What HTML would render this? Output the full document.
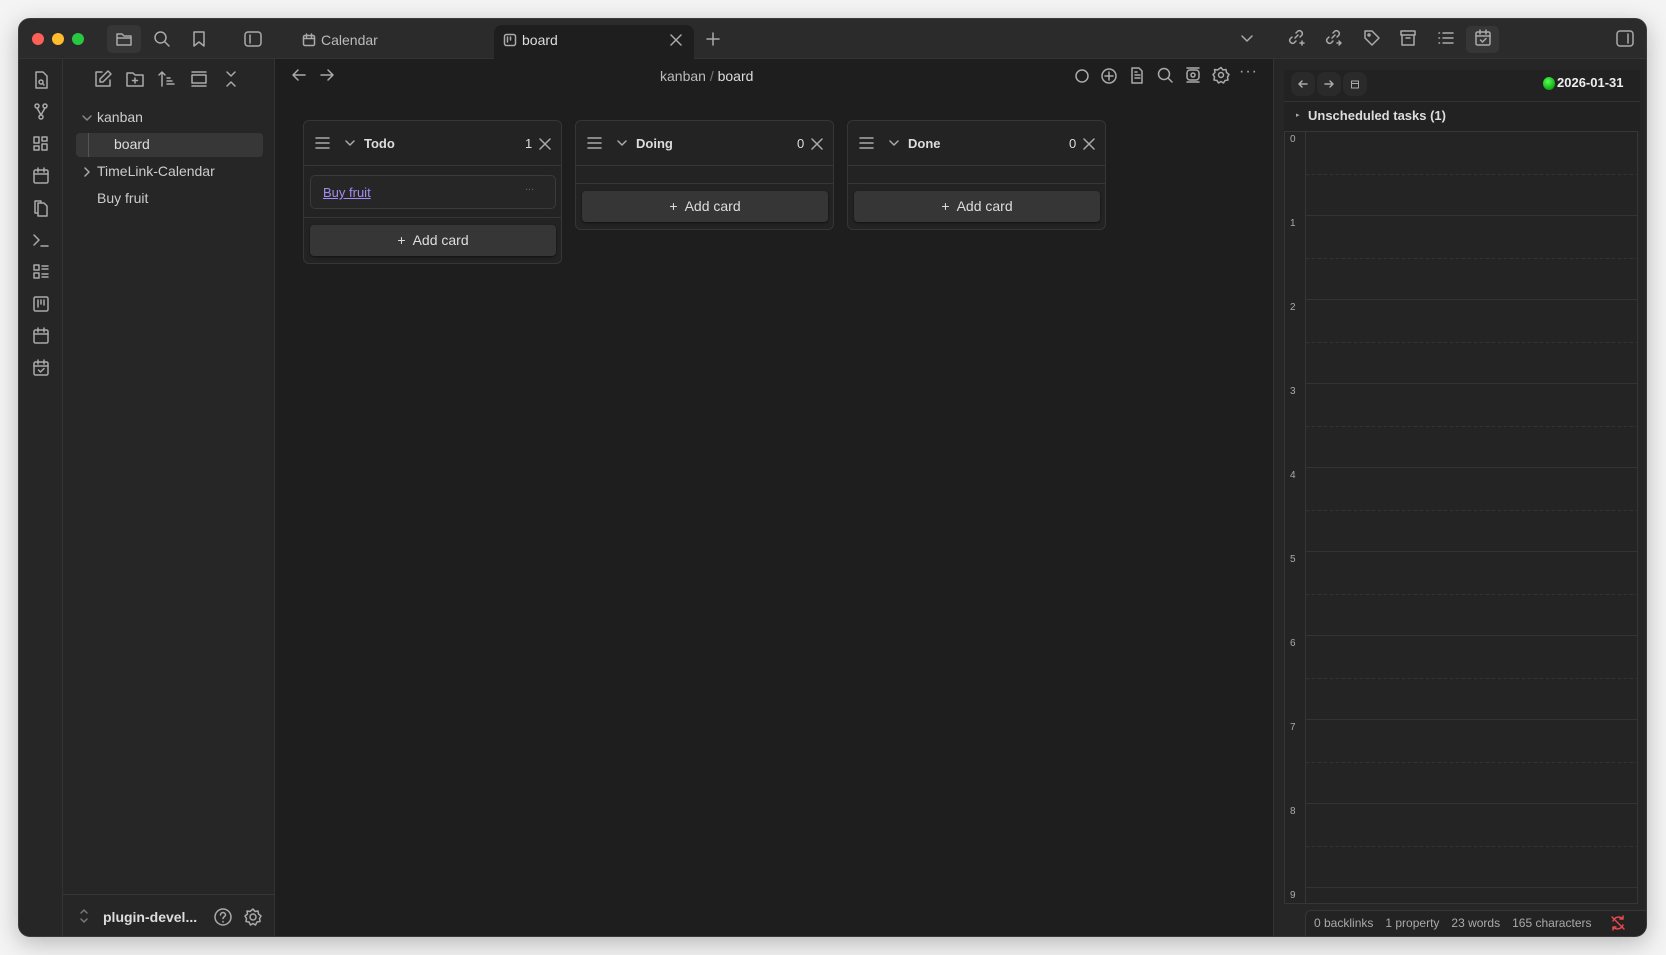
<!DOCTYPE html>
<html><head><meta charset="utf-8"><style>
*{box-sizing:border-box;margin:0;padding:0}
body{width:1666px;height:955px;background:#f4f4f4;font-family:"Liberation Sans",sans-serif;position:relative;overflow:hidden;color:#dadada}
.win{position:absolute;left:18px;top:18px;width:1629px;height:919px;border-radius:12px;overflow:hidden;background:#1e1e1e;box-shadow:0 6px 24px rgba(0,0,0,.25);border:1px solid #3a3a3a}
.abs{position:absolute}
.title{left:0;top:0;width:100%;height:40px;background:#2b2b2b;border-bottom:1px solid #333}
.dot{width:12px;height:12px;border-radius:50%;top:14px}
.ribbon{left:0;top:40px;width:44px;bottom:0;background:#262626;border-right:1px solid #333}
.side{left:44px;top:40px;width:212px;bottom:0;background:#262626;border-right:1px solid #333}
.right{left:1254px;top:40px;right:0;bottom:0;background:#262626;border-left:1px solid #333}
svg{position:absolute;fill:none;stroke:#aaa;stroke-width:1.5;stroke-linecap:round;stroke-linejoin:round}
.lane{border:1px solid #363636;border-radius:6px;background:#232323}
.lh{height:45px;border-bottom:1px solid #363636;font-size:13px;font-weight:bold;color:#ddd}
.btn{background:#363636;border-radius:4px;font-size:14px;color:#ddd;text-align:center;box-shadow:0 1px 2px rgba(0,0,0,.5)}
.hr{font-size:10px;color:#aaa}
.st span{margin-right:12px}
</style></head><body>
<div class="win">
 <div class="abs title">
  <div class="abs dot" style="left:13px;background:#fe5f57"></div>
  <div class="abs dot" style="left:33px;background:#febc2e"></div>
  <div class="abs dot" style="left:53px;background:#28c840"></div>
  <div class="abs" style="left:88px;top:6px;width:34px;height:28px;background:#363636;border-radius:5px"></div>
  <svg style="left:96px;top:12px" width="18" height="16"><path d="M2 3h5l2 2h7v9H2z M2 7h14"/></svg>
  <svg style="left:134px;top:11px" width="18" height="18"><circle cx="7.5" cy="7.5" r="5.5"/><path d="M12 12l4 4"/></svg>
  <svg style="left:172px;top:11px" width="16" height="18"><path d="M3 2h10v14l-5-4-5 4z"/></svg>
  <svg style="left:224px;top:11px" width="20" height="18"><rect x="2" y="2" width="16" height="14" rx="3"/><path d="M7 5v8"/></svg>
  <svg style="left:283px;top:14px" width="14" height="14"><rect x="1.5" y="2.5" width="11" height="10" rx="1.5"/><path d="M1.5 5.5h11M4.5 1v3M9.5 1v3"/></svg>
  <div class="abs" style="left:302px;top:13px;font-size:14px;color:#bbb">Calendar</div>
  <div class="abs" style="left:475px;top:6px;width:200px;height:35px;background:#1e1e1e;border-radius:8px 8px 0 0"></div>
  <svg style="left:484px;top:14px" width="14" height="14"><rect x="1.5" y="1.5" width="11" height="11" rx="2"/><path d="M4.5 4v5M7.5 4v3"/></svg>
  <div class="abs" style="left:503px;top:13px;font-size:14px;color:#ddd">board</div>
  <svg style="left:651px;top:15px" width="12" height="12"><path d="M1 1l10 10M11 1L1 11"/></svg>
  <svg style="left:687px;top:13px" width="14" height="14"><path d="M7 1v12M1 7h12"/></svg>
  <svg style="left:1221px;top:14px" width="14" height="12"><path d="M2 3l5 5 5-5"/></svg>
  <svg style="left:1268px;top:9px" width="20" height="20"><path d="M9 5l2-2a3 3 0 014 4l-2 2M9 13l-2 2a3 3 0 01-4-4l2-2M8 10l3-3M13 15h4M15 13v4"/></svg>
  <svg style="left:1305px;top:9px" width="20" height="20"><path d="M9 5l2-2a3 3 0 014 4l-2 2M9 13l-2 2a3 3 0 01-4-4l2-2M8 10l3-3M13 15h4l-2-2M17 15l-2 2"/></svg>
  <svg style="left:1343px;top:9px" width="20" height="20"><path d="M3 3h7l7 7-7 7-7-7z"/><circle cx="7" cy="7" r="1"/></svg>
  <svg style="left:1380px;top:10px" width="18" height="18"><rect x="2" y="2" width="14" height="4"/><path d="M3 6v10h12V6M7 9h4"/></svg>
  <svg style="left:1418px;top:10px" width="18" height="18"><path d="M6 4h10M6 9h10M6 14h10M2 4h.5M2 9h.5M2 14h.5"/></svg>
  <div class="abs" style="left:1447px;top:7px;width:33px;height:27px;background:#363636;border-radius:5px"></div>
  <svg style="left:1454px;top:9px" width="20" height="20"><rect x="3" y="4" width="14" height="13" rx="1.5"/><path d="M3 8h14M7 2v4M13 2v4M7.5 12l2 2 3.5-3.5"/></svg>
  <svg style="left:1596px;top:10px" width="20" height="20"><rect x="2" y="2" width="16" height="15" rx="3"/><path d="M13 5v9"/></svg>
 </div>
 <div class="abs ribbon">
  <svg style="left:12px;top:11px" width="20" height="20"><path d="M5 2h7l4 4v12H5z"/><circle cx="10" cy="12" r="2"/><path d="M11.5 13.5l1.5 1.5"/></svg>
  <svg style="left:12px;top:43px" width="20" height="20"><circle cx="6" cy="4" r="2"/><circle cx="14" cy="4" r="2"/><circle cx="10" cy="15" r="2"/><path d="M6 6l4 7M14 6l-4 7"/></svg>
  <svg style="left:12px;top:75px" width="20" height="20"><rect x="3" y="3" width="5" height="6"/><rect x="11" y="3" width="5" height="4"/><rect x="3" y="12" width="5" height="4"/><rect x="11" y="10" width="5" height="6"/></svg>
  <svg style="left:12px;top:107px" width="20" height="20"><rect x="3" y="4" width="14" height="13" rx="1.5"/><path d="M3 8h14M7 2v4M13 2v4"/></svg>
  <svg style="left:12px;top:139px" width="20" height="20"><path d="M7 5h6l3 3v10H7zM4 3h6v2M4 3v12h3"/></svg>
  <svg style="left:12px;top:171px" width="20" height="20"><path d="M3 5l5 5-5 5M10 16h7"/></svg>
  <svg style="left:12px;top:203px" width="20" height="20"><rect x="3" y="3" width="5" height="5"/><rect x="3" y="11" width="5" height="5"/><path d="M11 4h6M11 7h6M11 12h6M11 15h6"/></svg>
  <svg style="left:12px;top:235px" width="20" height="20"><rect x="3" y="3" width="14" height="14" rx="1.5"/><path d="M7 6v7M10 6v4M13 6v5"/></svg>
  <svg style="left:12px;top:267px" width="20" height="20"><rect x="3" y="4" width="14" height="13" rx="1.5"/><path d="M3 8h14M7 2v4M13 2v4"/></svg>
  <svg style="left:12px;top:299px" width="20" height="20"><rect x="3" y="4" width="14" height="13" rx="1.5"/><path d="M3 8h14M7 2v4M13 2v4M7.5 12l2 2 3.5-3.5"/></svg>
 </div>
 <div class="abs side">
  <svg style="left:30px;top:10px" width="20" height="20"><path d="M9 3H3v14h14v-6M15 2l3 3-8 8H7v-3z"/></svg>
  <svg style="left:62px;top:10px" width="20" height="20"><path d="M2 4h6l2 2h8v11H2zM10 9v5M7.5 11.5h5"/></svg>
  <svg style="left:94px;top:10px" width="20" height="20"><path d="M5 17V3M2 6l3-3 3 3M10 9h3M10 12h5M10 15h7"/></svg>
  <svg style="left:126px;top:10px" width="20" height="20"><path d="M3 3h14M3 17h14"/><rect x="3" y="6" width="14" height="8"/></svg>
  <svg style="left:158px;top:10px" width="20" height="20"><path d="M6 3l4 4 4-4M6 17l4-4 4 4"/></svg>
  <svg style="left:18px;top:53px" width="12" height="12"><path d="M2 4l4 4 4-4" stroke="#888"/></svg>
  <div class="abs" style="left:34px;top:50px;font-size:14px;color:#ccc">kanban</div>
  <div class="abs" style="left:13px;top:74px;width:187px;height:24px;background:#373737;border-radius:4px"></div>
  <div class="abs" style="left:25px;top:74px;width:1px;height:24px;background:#555"></div>
  <div class="abs" style="left:51px;top:77px;font-size:14px;color:#ddd">board</div>
  <svg style="left:18px;top:107px" width="12" height="12"><path d="M4 2l4 4-4 4"/></svg>
  <div class="abs" style="left:34px;top:104px;font-size:14px;color:#ccc">TimeLink-Calendar</div>
  <div class="abs" style="left:34px;top:131px;font-size:14px;color:#ccc">Buy fruit</div>
  <div class="abs" style="left:0;top:835px;width:100%;height:1px;background:#363636"></div>
  <svg style="left:15px;top:848px" width="12" height="18"><path d="M3 6l3-3 3 3M3 12l3 3 3-3" stroke="#777"/></svg>
  <div class="abs" style="left:40px;top:850px;font-size:14px;font-weight:bold;color:#ddd">plugin-devel...</div>
  <svg style="left:150px;top:848px" width="20" height="20"><circle cx="10" cy="10" r="8"/><path d="M7.5 8a2.5 2.5 0 115 0c0 1.5-2.5 2-2.5 3.5M10 14.5v.5"/></svg>
  <svg style="left:180px;top:848px" width="20" height="20"><circle cx="10" cy="10" r="3"/><path d="M10 2l2 2.5 3-.5.5 3L18 9l-1.5 2.5L17 14.5l-3 .5-1.5 3L10 16.5 7.5 18 6 15l-3-.5.5-3L2 9l2.5-2L4 4l3 .5z"/></svg>
 </div>
 <div class="abs" style="left:256px;top:40px;width:998px;bottom:0">
  <svg style="left:16px;top:8px" width="16" height="16"><path d="M14 8H2M7 3L2 8l5 5"/></svg>
  <svg style="left:44px;top:8px" width="16" height="16"><path d="M2 8h12M9 3l5 5-5 5"/></svg>
  <div class="abs" style="left:385px;top:9px;font-size:14px;color:#bbb">kanban <span style="color:#777">/</span> <span style="color:#ddd">board</span></div>
  <svg style="left:798px;top:8px" width="18" height="18"><circle cx="9" cy="9" r="6"/></svg>
  <svg style="left:825px;top:8px" width="18" height="18"><circle cx="9" cy="9" r="7"/><path d="M9 5v8M5 9h8"/></svg>
  <svg style="left:853px;top:7px" width="18" height="18"><path d="M4 2h7l3 3v12H4zM7 9h5M7 12h5M7 6h2"/></svg>
  <svg style="left:881px;top:7px" width="18" height="18"><circle cx="8" cy="8" r="5.5"/><path d="M12 12l4 4"/></svg>
  <svg style="left:909px;top:7px" width="18" height="18"><path d="M3 2h12M3 16h12"/><rect x="3" y="4" width="12" height="10" rx="3"/><circle cx="9" cy="9" r="2"/></svg>
  <svg style="left:937px;top:7px" width="18" height="18"><circle cx="9" cy="9" r="2.5"/><path d="M9 1.5l2 2.5 3-.5.5 3L17 8.5l-1.5 2.5.5 3-3 .5-1.5 2.5-2.5-1.5-2.5 1.5-1.5-2.5-3-.5.5-3L1 8.5l2-2L2.5 3.5l3 .5z"/></svg>
  <div class="abs" style="left:964px;top:8px;font-size:16px;color:#aaa;letter-spacing:1px;line-height:10px">···</div>

  <div class="abs lane" style="left:28px;top:61px;width:259px;height:144px">
   <div class="abs lh" style="left:0;top:0;width:100%">
    <svg style="left:10px;top:14px" width="18" height="16"><path d="M2 3h13M2 8h13M2 13h13"/></svg>
    <svg style="left:40px;top:17px" width="12" height="10"><path d="M2 3l4 4 4-4"/></svg>
    <div class="abs" style="left:60px;top:15px">Todo</div>
    <div class="abs" style="left:221px;top:15px;font-weight:normal">1</div>
    <svg style="left:235px;top:17px" width="12" height="12"><path d="M1 1l10 10M11 1L1 11"/></svg>
   </div>
   <div class="abs" style="left:6px;top:54px;width:246px;height:34px;border:1px solid #3a3a3a;border-radius:5px;background:#262626">
    <div class="abs" style="left:12px;top:9px;font-size:13px;color:#a48cf0;text-decoration:underline">Buy fruit</div>
    <div class="abs" style="left:214px;top:5px;font-size:11px;color:#666">...</div>
   </div>
   <div class="abs" style="left:0;top:96px;width:100%;height:1px;background:#363636"></div>
   <div class="abs btn" style="left:6px;top:104px;width:246px;height:31px;line-height:31px">+&nbsp; Add card</div>
  </div>
  <div class="abs lane" style="left:300px;top:61px;width:259px;height:110px">
   <div class="abs lh" style="left:0;top:0;width:100%">
    <svg style="left:10px;top:14px" width="18" height="16"><path d="M2 3h13M2 8h13M2 13h13"/></svg>
    <svg style="left:40px;top:17px" width="12" height="10"><path d="M2 3l4 4 4-4"/></svg>
    <div class="abs" style="left:60px;top:15px">Doing</div>
    <div class="abs" style="left:221px;top:15px;font-weight:normal">0</div>
    <svg style="left:235px;top:17px" width="12" height="12"><path d="M1 1l10 10M11 1L1 11"/></svg>
   </div>
   <div class="abs" style="left:0;top:62px;width:100%;height:1px;background:#363636"></div>
   <div class="abs btn" style="left:6px;top:70px;width:246px;height:31px;line-height:31px">+&nbsp; Add card</div>
  </div>
  <div class="abs lane" style="left:572px;top:61px;width:259px;height:110px">
   <div class="abs lh" style="left:0;top:0;width:100%">
    <svg style="left:10px;top:14px" width="18" height="16"><path d="M2 3h13M2 8h13M2 13h13"/></svg>
    <svg style="left:40px;top:17px" width="12" height="10"><path d="M2 3l4 4 4-4"/></svg>
    <div class="abs" style="left:60px;top:15px">Done</div>
    <div class="abs" style="left:221px;top:15px;font-weight:normal">0</div>
    <svg style="left:235px;top:17px" width="12" height="12"><path d="M1 1l10 10M11 1L1 11"/></svg>
   </div>
   <div class="abs" style="left:0;top:62px;width:100%;height:1px;background:#363636"></div>
   <div class="abs btn" style="left:6px;top:70px;width:246px;height:31px;line-height:31px">+&nbsp; Add card</div>
  </div>
 </div>
 <div class="abs right">
  <div class="abs" style="left:10px;top:11px;width:356px;height:32px;background:#222;border-bottom:1px solid #333"></div>
  <div class="abs" style="left:17px;top:13px;width:24px;height:24px;background:#2a2a2a;border-radius:8px"></div>
  <svg style="left:23px;top:19px" width="12" height="12"><path d="M10 6H2M5 3L2 6l3 3"/></svg>
  <div class="abs" style="left:43px;top:13px;width:24px;height:24px;background:#2a2a2a;border-radius:8px"></div>
  <svg style="left:49px;top:19px" width="12" height="12"><path d="M2 6h8M7 3l3 3-3 3"/></svg>
  <div class="abs" style="left:69px;top:13px;width:24px;height:24px;background:#2a2a2a;border-radius:8px"></div>
  <svg style="left:76px;top:20px" width="10" height="10"><rect x="1.5" y="2" width="7" height="7" stroke-width="1"/><path d="M1.5 4.5h7" stroke-width="1"/></svg>
  <div class="abs" style="left:269px;top:18px;width:12px;height:13px;border-radius:50%;background:radial-gradient(circle at 40% 35%,#5f5,#1a1 70%)"></div>
  <div class="abs" style="left:283px;top:16px;font-size:13px;font-weight:bold;color:#eee">2026-01-31</div>
  <div class="abs" style="left:10px;top:43px;width:356px;height:29px;background:#222"></div>
  <div class="abs" style="left:22px;top:52px;font-size:7px;color:#aaa">▸</div>
  <div class="abs" style="left:34px;top:49px;font-size:13px;font-weight:bold;color:#ddd">Unscheduled tasks (1)</div>
  <div class="abs" style="left:10px;top:72px;width:354px;height:773px;border:1px solid #363636;background:#242424;overflow:hidden">
   <div class="abs" style="left:20px;top:0;width:1px;height:100%;background:#363636"></div>
   <div class="abs" style="left:21px;top:0;right:0;height:100%;background:repeating-linear-gradient(to bottom,transparent 0,transparent 83px,#333 83px,#333 84px)"></div>
   <svg style="left:21px;top:0" width="340" height="774"><path d="M0 42.5h340M0 126.5h340M0 210.5h340M0 294.5h340M0 378.5h340M0 462.5h340M0 546.5h340M0 630.5h340M0 714.5h340" stroke="#333" stroke-dasharray="3 3" stroke-width="1"/></svg>
   <div class="abs hr" style="left:5px;top:2px">0</div>
   <div class="abs hr" style="left:5px;top:86px">1</div>
   <div class="abs hr" style="left:5px;top:170px">2</div>
   <div class="abs hr" style="left:5px;top:254px">3</div>
   <div class="abs hr" style="left:5px;top:338px">4</div>
   <div class="abs hr" style="left:5px;top:422px">5</div>
   <div class="abs hr" style="left:5px;top:506px">6</div>
   <div class="abs hr" style="left:5px;top:590px">7</div>
   <div class="abs hr" style="left:5px;top:674px">8</div>
   <div class="abs hr" style="left:5px;top:758px">9</div>
  </div>
  <div class="abs" style="left:31px;top:851px;right:0;height:40px;border:1px solid #363636;border-right:none;border-bottom:none;border-radius:6px 0 0 0;background:#232323"></div>
  <div class="abs st" style="left:40px;top:857px;font-size:12px;color:#aaa;white-space:nowrap"><span>0 backlinks</span><span>1 property</span><span>23 words</span><span style="margin:0">165 characters</span></div>
  <svg style="left:336px;top:856px" width="16" height="16"><path d="M3 6a6 6 0 0110-2M13 10a6 6 0 01-10 2M13 1v3h-3M3 15v-3h3M2 2l12 12" stroke="#e5484d"/></svg>
 </div>
</div>
</body></html>
